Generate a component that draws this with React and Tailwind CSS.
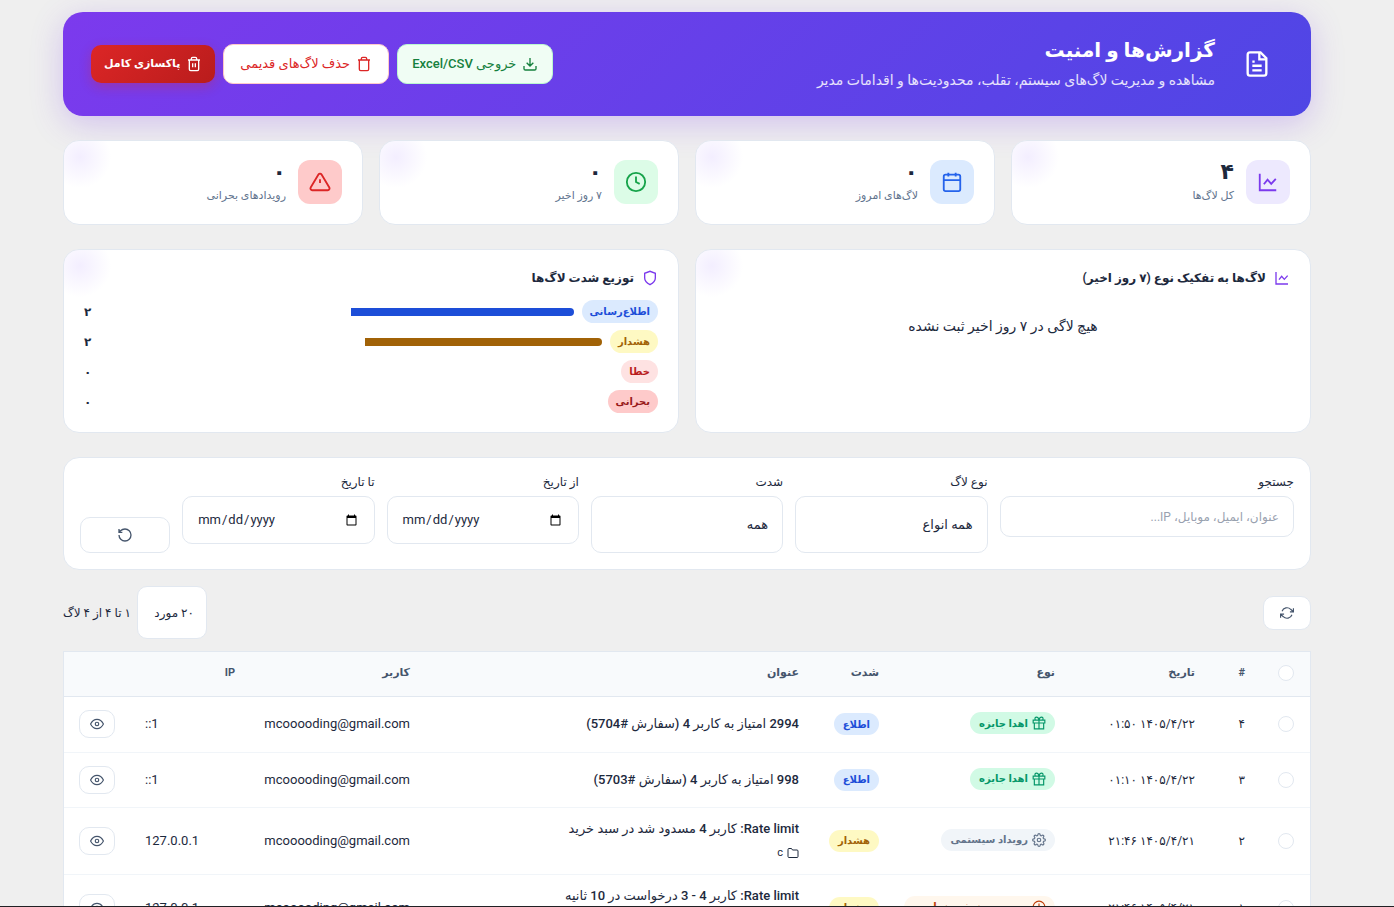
import React, { useState } from 'react';

const ICONS = {
  file: <><path d="M15 2H6a2 2 0 0 0-2 2v16a2 2 0 0 0 2 2h12a2 2 0 0 0 2-2V7z" /><path d="M14 2v6h6M10 10H8M16 13.5H8M16 17.5H8" /></>,
  download: <path d="M21 15v4a2 2 0 0 1-2 2H5a2 2 0 0 1-2-2v-4M7 10l5 5 5-5M12 15V3" />,
  trash: <path d="M3 6h18M19 6v14a2 2 0 0 1-2 2H7a2 2 0 0 1-2-2V6m3 0V4a2 2 0 0 1 2-2h4a2 2 0 0 1 2 2v2" />,
  trashFull: <path d="M3 6h18M19 6v14a2 2 0 0 1-2 2H7a2 2 0 0 1-2-2V6m3 0V4a2 2 0 0 1 2-2h4a2 2 0 0 1 2 2v2M10 11v6M14 11v6" />,
  chart: <path d="M3 3v18h18M7.5 14.5l4-5 4 4.5 5-5.5" />,
  calendar: <><rect x="3" y="4" width="18" height="18" rx="2" /><path d="M16 2v4M8 2v4M3 10h18" /></>,
  clock: <><circle cx="12" cy="12" r="10" /><path d="M12 6v6l4 2" /></>,
  alert: <path d="M10.29 3.86 1.82 18a2 2 0 0 0 1.71 3h16.94a2 2 0 0 0 1.71-3L13.71 3.86a2 2 0 0 0-3.42 0zM12 9v4" />,
  shield: <path d="M12 22s8-4 8-10V5l-8-3-8 3v7c0 6 8 10 8 10z" />,
  reset: <path d="M3 12a9 9 0 1 0 9-9 9.75 9.75 0 0 0-6.74 2.74L3 8M3 3v5h5" />,
  refresh: <path d="M23 4v6h-6M1 20v-6h6M3.51 9a9 9 0 0 1 14.85-3.36L23 10M1 14l4.64 4.36A9 9 0 0 0 20.49 15" />,
  eye: <><path d="M1 12s4-8 11-8 11 8 11 8-4 8-11 8-11-8-11-8z" /><circle cx="12" cy="12" r="3" /></>,
  gift: <path d="M20 12v10H4V12M2 7h20v5H2zM12 22V7M12 7H7.5a2.5 2.5 0 0 1 0-5C11 2 12 7 12 7zM12 7h4.5a2.5 2.5 0 0 0 0-5C13 2 12 7 12 7z" />,
  gear: <><circle cx="12" cy="12" r="3" /><path d="M19.4 15a1.65 1.65 0 0 0 .33 1.82l.06.06a2 2 0 1 1-2.83 2.83l-.06-.06a1.65 1.65 0 0 0-2.8 1.17V21a2 2 0 0 1-4 0v-.09A1.65 1.65 0 0 0 7.2 19.65l-.06.06a2 2 0 1 1-2.83-2.83l.06-.06A1.65 1.65 0 0 0 3.09 14H3a2 2 0 0 1 0-4h.09A1.65 1.65 0 0 0 4.37 7.2l-.06-.06a2 2 0 1 1 2.83-2.83l.06.06A1.65 1.65 0 0 0 10 3.09V3a2 2 0 0 1 4 0v.09a1.65 1.65 0 0 0 2.8 1.28l.06-.06a2 2 0 1 1 2.83 2.83l-.06.06A1.65 1.65 0 0 0 20.91 10H21a2 2 0 0 1 0 4h-.09a1.65 1.65 0 0 0-1.51 1z" /></>,
  folder: <path d="M22 19a2 2 0 0 1-2 2H4a2 2 0 0 1-2-2V5a2 2 0 0 1 2-2h5l2 3h9a2 2 0 0 1 2 2z" />,
};

function Icon({ name, size = 16, className = '' }) {
  return (
    <svg width={size} height={size} viewBox="0 0 24 24" fill="none" stroke="currentColor" strokeWidth="2" className={`shrink-0 ${className}`} aria-hidden="true">
      {ICONS[name]}
    </svg>
  );
}

const STATS = [
  { icon: 'chart',    value: '۴', label: 'کل لاگ‌ها',         tone: 'bg-[#ede9fe] text-[#7c3aed]' },
  { icon: 'calendar', value: '۰', label: 'لاگ‌های امروز',     tone: 'bg-[#dbeafe] text-[#2563eb]' },
  { icon: 'clock',    value: '۰', label: '۷ روز اخیر',        tone: 'bg-[#dcfce7] text-[#16a34a]' },
  { icon: 'alert',    value: '۰', label: 'رویدادهای بحرانی',  tone: 'bg-[#fecaca] text-[#dc2626]' },
];

const SEVERITIES = [
  { label: 'اطلاع‌رسانی', count: '۲', share: 50, badge: 'bg-[#dbeafe] text-[#1d4ed8]', bar: 'bg-[#1d4ed8]' },
  { label: 'هشدار',       count: '۲', share: 50, badge: 'bg-[#fef9c3] text-[#a16207]', bar: 'bg-[#a16207]' },
  { label: 'خطا',         count: '۰', share: 0,  badge: 'bg-[#fee2e2] text-[#b91c1c]', bar: 'bg-[#b91c1c]' },
  { label: 'بحرانی',      count: '۰', share: 0,  badge: 'bg-[#fecaca] text-[#991b1b]', bar: 'bg-[#991b1b]' },
];

const TYPES = {
  reward: { icon: 'gift',  label: 'اهدا جایزه',          tone: 'bg-[#d1fae5] text-[#059669]' },
  system: { icon: 'gear',  label: 'رویداد سیستمی',       tone: 'bg-[#f1f5f9] text-[#64748b]' },
  rate:   { icon: 'clock', label: 'محدودیت نرخ درخواست', tone: 'bg-[#fff7ed] text-[#c2410c]' },
};

const LEVELS = {
  info:    { label: 'اطلاع', tone: 'bg-[#dbeafe] text-[#1d4ed8]' },
  warning: { label: 'هشدار', tone: 'bg-[#fef9c3] text-[#a16207]' },
};

const LOGS = [
  { id: '۴', date: '۱۴۰۵/۴/۲۲ ۰۱:۵۰', type: 'reward', level: 'info',    title: '2994 امتیاز به کاربر 4 (سفارش #5704)',          user: 'mcooooding@gmail.com', ip: '::1' },
  { id: '۳', date: '۱۴۰۵/۴/۲۲ ۰۱:۱۰', type: 'reward', level: 'info',    title: '998 امتیاز به کاربر 4 (سفارش #5703)',           user: 'mcooooding@gmail.com', ip: '::1' },
  { id: '۲', date: '۱۴۰۵/۴/۲۱ ۲۱:۴۶', type: 'system', level: 'warning', title: 'Rate limit: کاربر 4 مسدود شد در سبد خرید',      user: 'mcooooding@gmail.com', ip: '127.0.0.1', folder: 'c' },
  { id: '۱', date: '۱۴۰۵/۴/۲۱ ۲۱:۴۶', type: 'rate',   level: 'warning', title: 'Rate limit: کاربر 4 - 3 درخواست در 10 ثانیه',   user: 'mcooooding@gmail.com', ip: '127.0.0.1', folder: 'c' },
];

function Card({ className = '', children }) {
  return (
    <div className={`relative overflow-hidden rounded-2xl border border-slate-200 bg-white ${className}`}>
      <div className="pointer-events-none absolute -left-6 -top-6 size-20 rounded-full bg-[radial-gradient(circle,#f3eeff,transparent_55%)]" />
      {children}
    </div>
  );
}

function Field({ id, label, className, children }) {
  return (
    <div className={`flex flex-col gap-1 ${className}`}>
      <label htmlFor={id} className="text-[12px] leading-5 font-medium">{label}</label>
      {children}
    </div>
  );
}

function Check({ label, checked, onChange }) {
  return (
    <input
      type="checkbox"
      aria-label={label}
      checked={checked}
      onChange={onChange}
      className="block size-4 appearance-none rounded-full border border-slate-200 bg-white checked:bg-violet-600"
    />
  );
}

const BOX = 'w-full rounded-[10px] border border-slate-200 bg-white';

export default function App() {
  const [selected, setSelected] = useState([]);
  const [search, setSearch] = useState('');
  const [from, setFrom] = useState('');
  const [to, setTo] = useState('');

  const toggle = (id) => setSelected((s) => (s.includes(id) ? s.filter((x) => x !== id) : [...s, id]));
  const allSelected = selected.length === LOGS.length;

  return (
    <div dir="rtl" className="h-screen overflow-hidden border-b border-[#202024] bg-[#efefef] pt-3 pr-[83px] pl-[63px] font-[Roboto,'DejaVu_Sans',sans-serif] text-[13px] text-slate-800">
      <header className="mb-6 flex h-[104px] items-center justify-between rounded-[20px] bg-[linear-gradient(135deg,#7c3aed,#4f46e5)] px-7 text-white shadow-[0_8px_32px_rgba(124,58,237,0.25)]">
        <div className="flex items-center gap-4">
          <div className="flex size-[52px] items-center justify-center">
            <Icon name="file" size={28} />
          </div>
          <div>
            <h1 className="text-[20px] leading-8 font-bold">گزارش‌ها و امنیت</h1>
            <p className="text-[14px] leading-7 text-white/85">مشاهده و مدیریت لاگ‌های سیستم، تقلب، محدودیت‌ها و اقدامات مدیر</p>
          </div>
        </div>
        <div className="flex items-center gap-2 text-[13px] font-medium">
          <button className="flex h-10 items-center gap-1.5 rounded-[10px] border border-[#bbf7d0] bg-[#f0fdf4] px-[14px] text-[#15803d]">
            <Icon name="download" />
            خروجی Excel/CSV
          </button>
          <button className="flex h-10 items-center gap-1.5 rounded-[10px] border border-[#fecaca] bg-white px-4 text-[#dc2626]">
            <Icon name="trash" />
            حذف لاگ‌های قدیمی
          </button>
          <button className="flex h-[38px] items-center gap-1.5 rounded-[10px] bg-[linear-gradient(135deg,#dc2626,#b91c1c)] px-[13px] text-[11px] font-bold shadow-[0_4px_12px_rgba(220,38,38,0.3)]">
            <Icon name="trashFull" />
            پاکسازی کامل
          </button>
        </div>
      </header>

      <section className="mb-6 grid grid-cols-4 gap-4">
        {STATS.map((s) => (
          <Card key={s.label} className="flex h-[85px] items-center gap-3 px-5 pb-px">
            <div className={`flex size-11 items-center justify-center rounded-xl ${s.tone}`}>
              <Icon name={s.icon} size={22} />
            </div>
            <div>
              <div className="text-[22px] leading-7 font-bold">{s.value}</div>
              <div className="text-[11px] leading-5 text-slate-500">{s.label}</div>
            </div>
          </Card>
        ))}
      </section>

      <section className="mb-6 grid grid-cols-2 gap-4">
        <Card className="h-[184px] px-5 py-4">
          <h2 className="flex items-center gap-2 text-[12px] leading-6 font-bold">
            <Icon name="chart" className="text-[#7c3aed]" />
            لاگ‌ها به تفکیک نوع (۷ روز اخیر)
          </h2>
          <p className="mt-6 text-center text-[14px] leading-6">هیچ لاگی در ۷ روز اخیر ثبت نشده</p>
        </Card>
        <Card className="h-[184px] px-5 py-4">
          <h2 className="mb-[10px] flex items-center gap-2 text-[12px] leading-6 font-bold">
            <Icon name="shield" className="text-[#7c3aed]" />
            توزیع شدت لاگ‌ها
          </h2>
          <div className="flex flex-col gap-[7px]">
            {SEVERITIES.map((s) => (
              <div key={s.label} className="flex items-center gap-2">
                <span className={`rounded-full px-2 text-[10px] leading-[23px] font-bold ${s.badge}`}>{s.label}</span>
                <div className="h-2 flex-1 overflow-hidden rounded-full">
                  <div className={`h-full ${s.bar}`} style={{ width: `${s.share}%` }} />
                </div>
                <span className="w-9 text-end text-[12px] font-bold">{s.count}</span>
              </div>
            ))}
          </div>
        </Card>
      </section>

      <form className="mb-4 grid h-[113px] grid-cols-12 gap-3 rounded-2xl border border-slate-200 bg-white px-4 pt-[14px] pb-4" onSubmit={(e) => e.preventDefault()}>
        <Field id="search" label="جستجو" className="col-span-3">
          <input id="search" type="text" value={search} onChange={(e) => setSearch(e.target.value)} placeholder="عنوان، ایمیل، موبایل، IP..." className={`${BOX} h-[41px] px-[14px] text-[12px] placeholder:text-gray-400`} />
        </Field>
        <Field id="type" label="نوع لاگ" className="col-span-2">
          <select id="type" className={`${BOX} h-[57px] appearance-none px-[14px] text-[13px]`}>
            <option>همه انواع</option>
          </select>
        </Field>
        <Field id="severity" label="شدت" className="col-span-2">
          <select id="severity" className={`${BOX} h-[57px] appearance-none px-[14px] text-[13px]`}>
            <option>همه</option>
          </select>
        </Field>
        <Field id="from" label="از تاریخ" className="col-span-2">
          <input id="from" type="date" dir="ltr" value={from} onChange={(e) => setFrom(e.target.value)} className={`${BOX} h-12 px-[14px] text-[13px]`} />
        </Field>
        <Field id="to" label="تا تاریخ" className="col-span-2">
          <input id="to" type="date" dir="ltr" value={to} onChange={(e) => setTo(e.target.value)} className={`${BOX} h-12 px-[14px] text-[13px]`} />
        </Field>
        <button type="reset" aria-label="بازنشانی" className={`${BOX} flex h-9 items-center justify-center self-end text-slate-600`}>
          <Icon name="reset" />
        </button>
      </form>

      <div className="mb-3 flex items-center justify-between">
        <button aria-label="بروزرسانی" className="flex h-[34px] w-12 items-center justify-center rounded-[10px] border border-slate-200 bg-white text-slate-600">
          <Icon name="refresh" size={14} />
        </button>
        <div className="flex items-center gap-1.5 text-[12px]">
          <select aria-label="تعداد در صفحه" className="h-[53px] w-[70px] appearance-none rounded-[10px] border border-slate-200 bg-white px-3">
            <option>۲۰ مورد</option>
          </select>
          <span>۱ تا ۴ از ۴ لاگ</span>
        </div>
      </div>

      <div className="border border-slate-200 bg-white">
        <table className="w-full table-fixed text-start">
          <colgroup>
            <col className="w-[49px]" />
            <col className="w-[50px]" />
            <col className="w-[140px]" />
            <col className="w-44" />
            <col className="w-20" />
            <col />
            <col className="w-[175px]" />
            <col className="w-[122px]" />
            <col className="w-[65px]" />
          </colgroup>
          <thead className="bg-slate-50 text-[11px] text-slate-600">
            <tr className="h-11 border-b border-slate-200 *:px-4 *:pb-0.5 *:text-start *:font-bold">
              <th><Check label="انتخاب همه" checked={allSelected} onChange={() => setSelected(allSelected ? [] : LOGS.map((l) => l.id))} /></th>
              <th>#</th>
              <th>تاریخ</th>
              <th>نوع</th>
              <th>شدت</th>
              <th>عنوان</th>
              <th>کاربر</th>
              <th>IP</th>
              <th />
            </tr>
          </thead>
          <tbody>
            {LOGS.map((log, i) => {
              const type = TYPES[log.type];
              const level = LEVELS[log.level];
              return (
                <tr key={log.id} className={`border-b border-slate-100 whitespace-nowrap *:px-4 ${log.folder ? 'h-[67px]' : i === 0 ? 'h-14' : 'h-[55px]'}`}>
                  <td><Check label={`انتخاب ${log.id}`} checked={selected.includes(log.id)} onChange={() => toggle(log.id)} /></td>
                  <td className="text-[12px]">{log.id}</td>
                  <td className="text-[12px]">{log.date}</td>
                  <td>
                    <span className={`inline-flex h-[22px] items-center gap-1 rounded-full px-[9px] text-[10px] font-bold ${type.tone}`}>
                      <Icon name={type.icon} size={14} />
                      {type.label}
                    </span>
                  </td>
                  <td>
                    <span className={`inline-flex h-[22px] items-center rounded-full px-[9px] text-[10px] font-bold ${level.tone}`}>{level.label}</span>
                  </td>
                  <td>
                    <div className="leading-6 font-medium">{log.title}</div>
                    {log.folder && (
                      <div className="flex items-center gap-1 text-[11px] leading-6">
                        <Icon name="folder" size={12} />
                        {log.folder}
                      </div>
                    )}
                  </td>
                  <td>{log.user}</td>
                  <td dir="ltr" className="text-left">{log.ip}</td>
                  <td>
                    <button aria-label="مشاهده" className="-mx-0.5 flex h-7 w-9 items-center justify-center rounded-[10px] border border-slate-200 bg-white text-slate-600">
                      <Icon name="eye" size={14} />
                    </button>
                  </td>
                </tr>
              );
            })}
          </tbody>
        </table>
      </div>
    </div>
  );
}
